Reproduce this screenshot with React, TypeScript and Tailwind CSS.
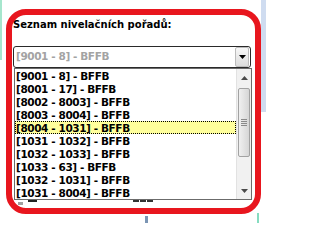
import React from "react";

const rows = [
  "[9001 - 8] - BFFB",
  "[8001 - 17] - BFFB",
  "[8002 - 8003] - BFFB",
  "[8003 - 8004] - BFFB",
  "[8004 - 1031] - BFFB",
  "[1031 - 1032] - BFFB",
  "[1032 - 1033] - BFFB",
  "[1033 - 63] - BFFB",
  "[1032 - 1031] - BFFB",
  "[1031 - 8004] - BFFB",
];

const selected = 4;

function Arrow({ dir }: { dir: "up" | "down" }) {
  return (
    <svg width="7" height="4" viewBox="0 0 7 4">
      <path d={dir === "up" ? "M3.5 0L7 4H0Z" : "M0 0H7L3.5 4Z"} fill="currentColor" />
    </svg>
  );
}

export default function App() {
  return (
    <div className="relative h-[223px] w-[266px] overflow-hidden bg-white pl-[6px] pt-[9px] font-['DejaVu_Sans',sans-serif]">
      {/* slivers of the windows behind */}
      <div className="absolute left-0 top-0 h-[60px] w-[2px] bg-[#a6e6cd]" />
      <div className="absolute right-0 top-0 h-[112px] w-[5px] bg-[#cfdcf0]" />
      <div className="absolute left-[257px] top-[213px] h-[10px] w-[2px] bg-[#86dcc0]" />
      <div className="absolute left-[145px] top-[216px] h-[7px] w-[3px] bg-[#7b95b4]" />

      <div className="h-[205px] w-[255px] rounded-[20px] border-[6px] border-[#e8161e] bg-white">
        <div className="pl-px pt-[4px] text-[10px] font-bold leading-[12px] text-black">
          Seznam nivelačních pořadů:
        </div>

        {/* combo */}
        <div className="ml-px mt-[15px] flex h-[22px] w-[238px] items-center rounded-[3px] border border-[#2a2a2a] pl-[2px] pr-px">
          <span className="flex-1 text-[10.5px] font-bold tracking-[-0.4px] text-[#a3a3a3]">[9001 - 8] - BFFB</span>
          <div className="flex h-[20px] w-[14px] items-center justify-center rounded-[2px] border border-[#bcbcbc] bg-gradient-to-b from-[#f7f7f7] to-[#dcdcdc] text-black">
            <Arrow dir="down" />
          </div>
        </div>

        {/* dropdown list */}
        <div className="ml-[2px] flex h-[132px] w-[238px] border border-[#6b6b6b] bg-white">
          <div className="flex-1">
            {rows.map((r, i) => (
              <div
                key={r}
                className={
                  i === selected
                    ? "h-[13px] bg-[#ffff9c] pl-px text-[10.5px] font-bold leading-[14px] tracking-[-0.4px] text-black outline-1 -outline-offset-1 outline-dotted outline-black"
                    : "h-[13px] pl-px text-[10.5px] font-bold leading-[14px] tracking-[-0.4px] text-black"
                }
              >
                {r}
              </div>
            ))}
          </div>
          <div className="flex w-[15px] flex-col border-l border-[#e2e2e2] bg-[#f1f1f1]">
            <div className="flex h-[17px] items-center justify-center text-[#4a4a4a]">
              <Arrow dir="up" />
            </div>
            <div className="mx-px mt-[2px] flex h-[69px] flex-col items-center justify-center gap-px rounded-[2px] border border-[#a2a2a2] bg-gradient-to-r from-[#f0f0f0] to-[#d6d6d6]">
              <div className="h-px w-[6px] bg-[#8a8a8a]" />
              <div className="h-px w-[6px] bg-[#8a8a8a]" />
              <div className="h-px w-[6px] bg-[#8a8a8a]" />
              <div className="h-px w-[6px] bg-[#8a8a8a]" />
            </div>
            <div className="flex-1" />
            <div className="flex h-[17px] items-center justify-center text-[#4a4a4a]">
              <Arrow dir="down" />
            </div>
          </div>
        </div>

        {/* bits of the form underneath */}
        <div className="flex h-[6px] items-start pl-[6px]">
          <span className="mt-[2px] h-[3px] w-[5px] bg-[#a0a0a0]" />
          <span className="ml-[5px] h-[2px] w-[9px] bg-[#222]" />
          <span className="ml-[96px] h-[2px] w-[20px] border-t-2 border-dashed border-[#333]" />
        </div>
      </div>
    </div>
  );
}
